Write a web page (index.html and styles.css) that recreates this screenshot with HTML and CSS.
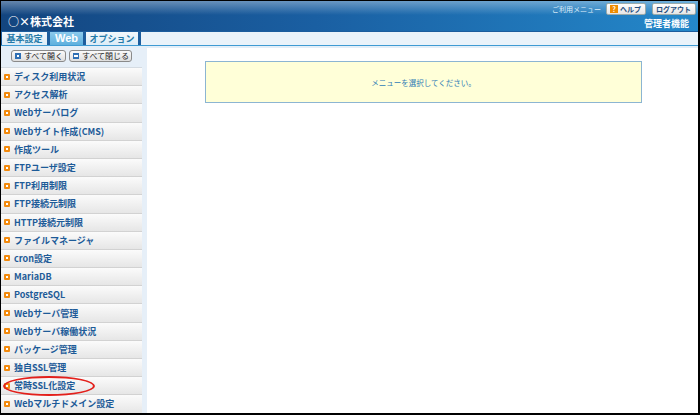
FILE: index.html
```html
<!doctype html>
<html>
<head>
<meta charset="utf-8">
<title>コントロールパネル</title>
<link rel="stylesheet" href="styles.css">
</head>
<body>
<div class="frame">
	<header class="top">
		<div class="brand">○×株式会社</div>
		<div class="util">
			<div class="util-links">
				<span class="usage">ご利用メニュー</span>
				<a class="sbtn"><i class="q">?</i>ヘルプ</a>
				<a class="sbtn">ログアウト</a>
			</div>
			<div class="role">管理者機能</div>
		</div>
	</header>
	<nav class="tabs">
		<a class="tab">基本設定</a>
		<a class="tab active">Web</a>
		<a class="tab">オプション</a>
		<div class="tab-fill"></div>
	</nav>
	<div class="tabs-line"></div>
	<div class="main">
		<aside class="side">
			<div class="toggles">
				<a class="tbtn"><i class="ico open"></i>すべて開く</a>
				<a class="tbtn"><i class="ico close"></i>すべて閉じる</a>
			</div>
			<ul class="menu">
				<li><i class="dot"></i>ディスク利用状況</li>
				<li><i class="dot"></i>アクセス解析</li>
				<li><i class="dot"></i>Webサーバログ</li>
				<li><i class="dot"></i>Webサイト作成(CMS)</li>
				<li><i class="dot"></i>作成ツール</li>
				<li><i class="dot"></i>FTPユーザ設定</li>
				<li><i class="dot"></i>FTP利用制限</li>
				<li><i class="dot"></i>FTP接続元制限</li>
				<li><i class="dot"></i>HTTP接続元制限</li>
				<li><i class="dot"></i>ファイルマネージャ</li>
				<li><i class="dot"></i>cron設定</li>
				<li><i class="dot"></i>MariaDB</li>
				<li><i class="dot"></i>PostgreSQL</li>
				<li><i class="dot"></i>Webサーバ管理</li>
				<li><i class="dot"></i>Webサーバ稼働状況</li>
				<li><i class="dot"></i>パッケージ管理</li>
				<li><i class="dot"></i>独自SSL管理</li>
				<li><i class="dot"></i>常時SSL化設定</li>
				<li><i class="dot"></i>Webマルチドメイン設定</li>
			</ul>
		</aside>
		<section class="content">
			<div class="notice">メニューを選択してください。</div>
		</section>
	</div>
	<div class="mark"></div>
</div>
</body>
</html>
```

FILE: styles.css
```css
	body {
		margin:0;
		font-family:"Noto Sans CJK JP", "Noto Sans", sans-serif;
		background:#fff;
	}
	.frame {
		position:relative;
		width:700px;
		height:415px;
		box-sizing:border-box;
		border:1px solid #000;
		border-right-width:2px;
		border-bottom-width:2px;
		display:flex;
		flex-direction:column;
		overflow:hidden;
	}

	/* header */
	.top {
		height:30px;
		flex:none;
		display:flex;
		justify-content:space-between;
		background:
			linear-gradient(180deg, rgba(255,255,255,.35) 0, rgba(255,255,255,.1) 10px, rgba(255,255,255,0) 14px),
			linear-gradient(90deg, #13457f 0, #1a5fa2 45%, #2488ca 100%);
	}
	.brand {
		align-self:flex-end;
		padding:0 0 3px 7px;
		color:#fff;
		font-size:11px;
		font-weight:bold;
		line-height:14px;
	}
	.util {
		display:flex;
		flex-direction:column;
		align-items:flex-end;
		padding:2px 2px 0 0;
	}
	.util-links {
		display:flex;
		align-items:center;
		gap:6px;
	}
	.usage {
		color:#dfeefa;
		font-size:7px;
		line-height:11px;
		margin-right:-1px;
	}
	.sbtn {
		display:flex;
		align-items:center;
		height:10px;
		padding:0 4px 0 3px;
		background:linear-gradient(#fff, #e6e6e6);
		border:1px solid #9aa;
		border-radius:2px;
		color:#234c7c;
		font-size:7px;
		font-weight:bold;
		line-height:10px;
	}
	.q {
		display:inline-block;
		width:8px;
		height:8px;
		margin-right:2px;
		background:#f08c00;
		color:#fff;
		font-style:normal;
		font-size:7px;
		line-height:8px;
		text-align:center;
	}
	.role {
		margin-top:3px;
		margin-right:7px;
		color:#fff;
		font-size:9px;
		font-weight:bold;
		line-height:11px;
	}

	/* tabs */
	.tabs {
		flex:none;
		height:13px;
		padding-top:1px;
		display:flex;
		gap:3px;
		background:#1c5d9d;
	}
	.tab {
		display:flex;
		align-items:center;
		justify-content:center;
		background:linear-gradient(#f2f8fc, #dcecf7);
		color:#247aa8;
		font-size:9px;
		font-weight:bold;
		line-height:13px;
	}
	.tab:first-child {
		width:45px;
		margin-left:1px;
	}
	.tab.active {
		width:33px;
		background:linear-gradient(#8ccaec, #5db0de);
		color:#fff;
		font-size:11px;
		font-family:"Liberation Sans", sans-serif;
	}
	.tab:nth-child(3) {
		width:52px;
	}
	.tab-fill {
		flex:1;
		background:#eaf3fa;
	}
	.tabs-line {
		flex:none;
		height:1px;
		background:#3f9bd3;
		border-bottom:2px solid #e4eff8;
	}

	/* body */
	.main {
		flex:1;
		display:flex;
		min-height:0;
	}
	.side {
		width:146px;
		flex:none;
		background:#e6eff8;
	}
	.toggles {
		height:17px;
		padding:2px 5px 0 0;
		display:flex;
		justify-content:center;
		gap:3px;
	}
	.tbtn {
		display:flex;
		align-items:center;
		height:10px;
		padding:0 2px 0 3px;
		background:linear-gradient(#fafafa, #dedede);
		border:1px solid #8a8a8a;
		border-radius:3px;
		color:#222;
		font-size:8px;
		line-height:10px;
	}
	.ico {
		position:relative;
		display:inline-block;
		width:6px;
		height:6px;
		margin-right:3px;
		background:#2f6fb4;
	}
	.ico.open:after {
		content:"";
		position:absolute;
		left:2px;
		top:2px;
		width:2px;
		height:2px;
		background:#fff;
	}
	.ico.close:after {
		content:"";
		position:absolute;
		left:1px;
		top:2px;
		width:4px;
		height:2px;
		background:#fff;
	}
	.menu {
		list-style:none;
		margin:0;
		padding:0;
		width:141px;
		border-top:1px solid #d4dbe2;
	}
	.menu li {
		display:flex;
		align-items:center;
		height:17.2px;
		border-bottom:1px solid #d2d2d2;
		background:linear-gradient(#fbfbfb, #e6e6e6);
		color:#1d5b98;
		font-size:9px;
		font-weight:bold;
		line-height:17px;
		white-space:nowrap;
	}
	.dot {
		position:relative;
		flex:none;
		width:6px;
		height:6px;
		margin:0 4px 0 3px;
		background:#f28a0e;
		border-radius:1px;
	}
	.dot:after {
		content:"";
		position:absolute;
		left:2px;
		top:2px;
		width:2px;
		height:2px;
		background:#fff;
	}

	.content {
		flex:1;
		background:#fff;
	}
	.notice {
		margin:13px 0 0 58px;
		width:435px;
		height:40px;
		display:flex;
		align-items:center;
		justify-content:center;
		background:#ffffd8;
		border:1px solid #8cb5d2;
		color:#2f7cb6;
		font-size:7.5px;
	}

	/* annotation */
	.mark {
		position:absolute;
		left:2px;
		top:375px;
		width:88px;
		height:16px;
		border:2px solid #e3201b;
		border-radius:50%;
	}
```
